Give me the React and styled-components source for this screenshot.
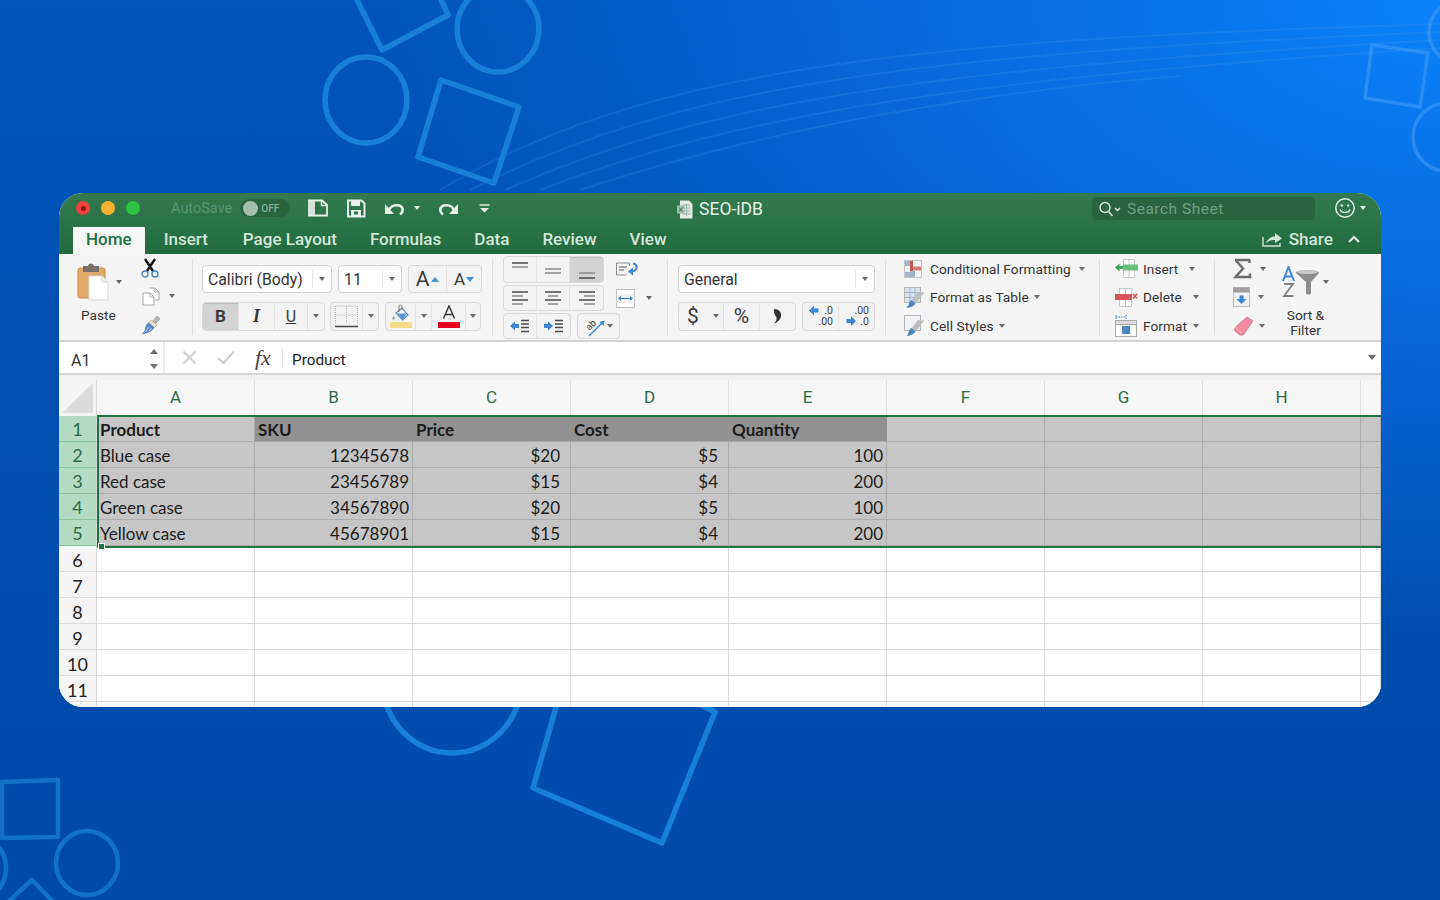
import React from 'react'
import styled, { createGlobalStyle } from 'styled-components'

const GlobalStyle = createGlobalStyle`
  html, body { margin: 0; padding: 0; height: 100%; overflow: hidden; }
  body { font-family: Roboto, "Liberation Sans", sans-serif; }
`

const Page = styled.div`
  position: relative;
  width: 1440px;
  height: 900px;
  box-sizing: border-box;
  padding: 193px 59px;
  overflow: hidden;
  background:
    radial-gradient(ellipse 1050px 640px at 100% 0%, #0a82f8 0%, rgba(10,120,240,.6) 50%, rgba(10,100,220,0) 100%),
    linear-gradient(180deg, #0054ba 0%, #004aa9 100%);
`

const Backdrop = styled.svg`
  position: absolute;
  inset: 0;
  width: 1440px;
  height: 900px;
  filter: blur(.7px);
`

const Window = styled.div`
  position: relative;
  width: 1322px;
  height: 514px;
  border-radius: 24px;
  overflow: hidden;
  background: #fff;
  display: flex;
  flex-direction: column;
`

/* title bar */
const TitleBar = styled.div`
  height: 33px;
  flex: none;
  display: grid;
  grid-template-columns: 1fr auto 1fr;
  align-items: center;
  background: linear-gradient(180deg, #33794e, #2a7248);
  color: #e6efe9;
`
const TitleLeft = styled.div`
  display: flex;
  align-items: center;
  padding-left: 17px;
  padding-bottom: 3px;
`
const TitleRight = styled.div`
  display: flex;
  align-items: center;
  justify-content: flex-end;
  padding-right: 15px;
  padding-bottom: 3px;
`
const Light = styled.span`
  width: 14px;
  height: 14px;
  margin-right: ${p => p.$gap}px;
  border-radius: 50%;
  background: ${p => p.$color};
  display: flex;
  align-items: center;
  justify-content: center;
  &::after {
    content: '';
    display: ${p => (p.$dot ? 'block' : 'none')};
    width: 5px;
    height: 5px;
    border-radius: 50%;
    background: #8d1a17;
  }
`
const AutoSave = styled.span`
  margin-left: 31px;
  font-size: 14.5px;
  color: #5c9877;
`
const Toggle = styled.span`
  width: 50px;
  height: 18px;
  margin-left: 8px;
  margin-right: 17px;
  box-sizing: border-box;
  padding-left: 3px;
  border-radius: 9px;
  background: #2a6340;
  display: flex;
  align-items: center;
  gap: 3px;
  font-size: 10px;
  font-weight: 500;
  color: #86b197;
  &::before {
    content: '';
    width: 15px;
    height: 15px;
    border-radius: 50%;
    background: #a3bfae;
  }
`
const BarIcon = styled.span`
  display: flex;
  margin-left: ${p => p.$left || 0}px;
`
const DocTitle = styled.div`
  display: flex;
  align-items: center;
  gap: 6px;
  font-size: 17.5px;
  color: #e8f1eb;
  padding-bottom: 1px;
`
const SearchBox = styled.div`
  width: 223px;
  height: 23px;
  box-sizing: border-box;
  padding: 1px 0 0 6px;
  border-radius: 4px;
  background: #2a6340;
  display: flex;
  align-items: center;
  gap: 6px;
  font-size: 15.5px;
  letter-spacing: .5px;
  color: #6d9f83;
`

/* tabs */
const TabBar = styled.div`
  height: 28px;
  flex: none;
  display: flex;
  align-items: flex-end;
  padding-left: 14px;
  padding-right: 21px;
  background: linear-gradient(180deg, #2a7248, #226b3f);
`
const Tab = styled.div`
  height: 27px;
  box-sizing: border-box;
  padding: 0 ${p => (p.$active ? 13 : 0)}px 3px;
  margin-right: ${p => p.$gap}px;
  display: flex;
  align-items: center;
  font-size: 17px;
  font-weight: 500;
  color: ${p => (p.$active ? '#217346' : '#d4e6da')};
  background: ${p => (p.$active ? '#f6f6f6' : 'transparent')};
`
const ShareBlock = styled.div`
  margin-left: auto;
  height: 27px;
  padding-bottom: 3px;
  box-sizing: border-box;
  display: flex;
  align-items: center;
  gap: 6px;
  font-size: 17.2px;
  font-weight: 500;
  color: #d4e6da;
`

/* ribbon */
const Ribbon = styled.div`
  height: 88px;
  flex: none;
  box-sizing: border-box;
  display: flex;
  background: #f5f5f5;
  border-bottom: 2px solid #d3d3d3;
  color: #333;
`
const Group = styled.div`
  position: relative;
  width: ${p => p.$width}px;
  flex: none;
  box-sizing: border-box;
  padding: ${p => p.$top ?? 11}px 0 0 ${p => p.$left}px;
  &::before {
    content: '';
    display: ${p => (p.$noline ? 'none' : 'block')};
    position: absolute;
    left: 0;
    top: 5px;
    bottom: 5px;
    width: 1px;
    background: #e0e0e0;
  }
`
const Row = styled.div`
  display: flex;
  align-items: center;
  gap: ${p => p.$gap ?? 6}px;
  height: ${p => p.$height || 28}px;
  margin-bottom: ${p => p.$bottom || 0}px;
`
const Split = styled.div`
  display: flex;
`
const Column = styled.div`
  display: flex;
  flex-direction: column;
  align-items: ${p => p.$align || 'flex-start'};
  margin-left: ${p => p.$left || 0}px;
  padding-top: ${p => p.$top || 0}px;
`
const PasteLabel = styled.div`
  font-size: 13.7px;
  margin-top: 6px;
  padding-left: 4px;
`
const ToolRow = styled.div`
  display: flex;
  align-items: center;
  gap: ${p => p.$gap ?? 8}px;
  height: ${p => p.$height || 28}px;
  margin-left: ${p => p.$left || 0}px;
  margin-top: ${p => p.$top || 0}px;
`
const SelectBox = styled.div`
  width: ${p => p.$width}px;
  height: 28px;
  box-sizing: border-box;
  padding-left: 5px;
  display: flex;
  align-items: center;
  justify-content: space-between;
  background: #fff;
  border: 1px solid #d2d2d2;
  border-radius: 4px;
  font-size: 15.8px;
  color: #333;
`
const SelectArrow = styled.span`
  width: 18px;
  height: 18px;
  display: flex;
  align-items: center;
  justify-content: center;
  border-left: 1px solid #e6e6e6;
`
const Caret = styled.span`
  display: inline-block;
  flex: none;
  width: 0;
  height: 0;
  margin: ${p => p.$margin || 0};
  border-left: ${p => p.$size || 3}px solid transparent;
  border-right: ${p => p.$size || 3}px solid transparent;
  border-top: ${p => (p.$size || 3) + 1}px solid ${p => p.$color || '#6a6a6a'};
  transform: ${p => (p.$up ? 'rotate(180deg)' : 'none')};
`
const ButtonGroup = styled.div`
  display: flex;
  height: ${p => p.$height || 29}px;
  box-sizing: border-box;
  margin-left: ${p => p.$left || 0}px;
  border: 1px solid #d8d8d8;
  border-radius: 4px;
  background: #f3f3f3;
  overflow: hidden;
`
const Button = styled.div`
  width: ${p => p.$width}px;
  flex: none;
  display: flex;
  align-items: center;
  justify-content: center;
  gap: ${p => p.$gap ?? 0}px;
  box-sizing: border-box;
  border-right: 1px solid ${p => (p.$open ? 'transparent' : '#e4e4e4')};
  background: ${p => (p.$active ? '#d3d3d3' : 'transparent')};
  box-shadow: ${p => (p.$active ? 'inset 0 1px 1px #bdbdbd' : 'none')};
  font-size: ${p => p.$size || 16}px;
  font-weight: ${p => p.$weight || 400};
  font-style: ${p => (p.$italic ? 'italic' : 'normal')};
  font-family: ${p => (p.$serif ? '"Liberation Serif", serif' : 'inherit')};
  text-decoration: ${p => (p.$under ? 'underline' : 'none')};
  color: #3a3a3a;
  &:last-child { border-right: none; }
`
const ListItem = styled.div`
  height: 28.5px;
  display: flex;
  align-items: center;
  gap: ${p => p.$gap ?? 5}px;
  font-size: 13.6px;
  color: #333;
  letter-spacing: .1px;
`
const SortLabel = styled.div`
  font-size: 13.7px;
  line-height: 15px;
  text-align: center;
  margin-top: 10px;
  color: #333;
`

/* formula bar */
const FormulaBar = styled.div`
  height: 33px;
  flex: none;
  box-sizing: border-box;
  display: flex;
  align-items: center;
  background: #fff;
  border-bottom: 2px solid #d6d6d6;
`
const NameBox = styled.div`
  width: 106px;
  height: 100%;
  box-sizing: border-box;
  padding: 6px 4px 0 12px;
  display: flex;
  align-items: center;
  justify-content: space-between;
  font-size: 16px;
  color: #333;
  border-right: 2px solid #ececec;
`
const NameArrows = styled.span`
  display: flex;
  margin-top: -3px;
`
const FormulaTools = styled.div`
  width: 118px;
  height: 19px;
  box-sizing: border-box;
  padding-left: 17px;
  display: flex;
  align-items: center;
  gap: 20px;
  border-right: 1px solid #dddddd;
`
const FxLabel = styled.span`
  font-family: "Liberation Serif", serif;
  font-style: italic;
  font-size: 22px;
  color: #444;
`
const FormulaText = styled.div`
  flex: 1;
  padding: 5px 0 0 9px;
  font-size: 15.3px;
  color: #222;
`
const Strip = styled.div`
  height: 5px;
  flex: none;
  background: #f3f3f3;
`

/* sheet */
const Sheet = styled.div`
  position: relative;
  flex: 1;
  display: grid;
  grid-template-columns: 38px repeat(8, 158px) 1fr;
  grid-template-rows: 36px;
  grid-auto-rows: 26px;
  font-family: Lato, "Liberation Sans", sans-serif;
  font-size: 17px;
  color: #1c1c1c;
  background: #fff;
`
const Corner = styled.div`
  background: #f4f4f4;
  border-right: 1px solid #d8d8d8;
  display: flex;
  align-items: flex-end;
  justify-content: flex-end;
  padding: 0 3px 3px 0;
  &::after {
    content: '';
    width: 0;
    height: 0;
    border-left: 31px solid transparent;
    border-bottom: 30px solid #dcdcdc;
  }
`
const ColHead = styled.div`
  display: flex;
  align-items: center;
  justify-content: center;
  padding-bottom: 3px;
  background: #f7f7f7;
  border-right: 1px solid #e2e2e2;
  font-family: Roboto, sans-serif;
  font-size: 17px;
  color: #2c6b48;
`
const RowHead = styled.div`
  display: flex;
  align-items: center;
  justify-content: center;
  box-sizing: border-box;
  padding-top: ${p => (p.$selected ? 0 : 2)}px;
  font-size: 18px;
  background: ${p => (p.$selected ? '#b4dbc3' : '#f5f5f5')};
  color: ${p => (p.$selected ? '#2c6b48' : '#222')};
  border-bottom: 1px solid ${p => (p.$selected ? '#8cc4a2' : '#dcdcdc')};
  border-right: 1px solid #d8d8d8;
`
const Cell = styled.div`
  box-sizing: border-box;
  padding: 1px ${p => p.$pad || 3}px 0 3px;
  display: flex;
  align-items: center;
  white-space: nowrap;
  justify-content: ${p => (p.$right ? 'flex-end' : 'flex-start')};
  font-weight: ${p => (p.$bold ? 700 : 400)};
  background: ${p => (p.$dark ? '#919191' : p.$selected ? '#c6c6c6' : '#fff')};
  border-right: 1px solid ${p => (p.$dark ? '#919191' : p.$selected ? '#adadad' : '#dcdcdc')};
  border-bottom: 1px solid ${p => (p.$selected ? '#adadad' : '#dcdcdc')};
`
const Selection = styled.div`
  position: absolute;
  left: 38px;
  right: 0;
  top: 35px;
  height: 133px;
  box-sizing: border-box;
  border-top: 2px solid #217346;
  border-bottom: 2px solid #217346;
  border-left: 2px solid #217346;
  pointer-events: none;
  &::after {
    content: '';
    position: absolute;
    left: -1px;
    bottom: -4px;
    width: 5px;
    height: 5px;
    background: #217346;
    border: 1px solid #fff;
  }
`

/* icons */
const Svg = ({ w, h, children }) => (
  <svg width={w} height={h} viewBox={`0 0 ${w} ${h}`} fill="none" style={{ flex: 'none', display: 'block' }}>{children}</svg>
)

const TitleColor = '#e6efe9'

const PanelIcon = () => (
  <Svg w={22} h={18}>
    <path d="M2 1.500h13l5 4.500v10.500H2z" stroke={TitleColor} strokeWidth="1.800" />
    <path d="M3 2h5v14H3z" fill={TitleColor} opacity=".9" />
    <path d="M14.500 2v4.500H20" stroke={TitleColor} strokeWidth="1.400" />
  </Svg>
)
const SaveIcon = () => (
  <Svg w={20} h={19}>
    <path d="M2 1.500h13.500l3 3v13H2z" stroke={TitleColor} strokeWidth="2" />
    <path d="M5 2h9v5H5z" fill={TitleColor} />
    <path d="M5 11h10v6H5z" fill={TitleColor} />
    <path d="M8 12.500h4v3H8z" fill="#2f7549" />
  </Svg>
)
const UndoIcon = ({ flip }) => (
  <svg width="21" height="15" viewBox="0 0 21 15" fill="none" style={{ display: 'block', transform: flip ? 'scaleX(-1)' : 'none' }}>
    <path d="M1 3v10h9z" fill={TitleColor} />
    <path d="M5 8.500C8 3.500 16.500 2.500 18.500 7.500 19.300 10 18 12 16 13.500" stroke={TitleColor} strokeWidth="2.600" />
  </svg>
)
const CustomizeIcon = () => (
  <Svg w={11} h={9}>
    <path d="M0.500 1h10" stroke={TitleColor} strokeWidth="1.500" />
    <path d="M1 4h9l-4.500 4.500z" fill={TitleColor} />
  </Svg>
)
const WorkbookIcon = () => (
  <Svg w={16} h={19}>
    <path d="M3 .5h9l3.500 3.500v14.500H3z" fill="#e4ebe6" />
    <path d="M6 5h7M6 8h7M6 11h7M6 14h7M9.500 4v12" stroke="#8fb09c" strokeWidth=".9" />
    <path d="M0 5.500h7.500v8H0z" fill="#9fbcaa" />
    <path d="M2 7.500l3.500 4M5.500 7.500l-3.500 4" stroke="#2e7548" strokeWidth="1" />
  </Svg>
)
const SearchIcon = () => (
  <Svg w={23} h={16}>
    <circle cx="7" cy="6.500" r="5" stroke="#dfeae3" strokeWidth="1.400" />
    <path d="M10.500 10.500l4 4.500" stroke="#dfeae3" strokeWidth="1.500" />
    <path d="M17 7l2.500 2.500L22 7" stroke="#dfeae3" strokeWidth="1.300" />
  </Svg>
)
const SmileIcon = () => (
  <Svg w={22} h={22}>
    <circle cx="11" cy="11" r="9.200" stroke={TitleColor} strokeWidth="1.500" />
    <circle cx="7.800" cy="8.500" r="1.200" fill={TitleColor} />
    <circle cx="14.200" cy="8.500" r="1.200" fill={TitleColor} />
    <path d="M6 12.500c1.500 4 8.500 4 10 0" stroke={TitleColor} strokeWidth="1.400" />
  </Svg>
)
const ShareIcon = () => (
  <Svg w={21} h={16}>
    <path d="M1 6v9h17v-3" stroke="#d4e6da" strokeWidth="1.400" />
    <path d="M4 13c1-5 5-7.500 9-7.500V2l7 5.500L13 12V9c-4-.5-7 1-9 4z" fill="#d4e6da" />
  </Svg>
)
const ChevronIcon = () => (
  <Svg w={12} h={8}>
    <path d="M1 7l5-5 5 5" stroke="#e3eee7" strokeWidth="2" />
  </Svg>
)
const PasteIcon = () => (
  <Svg w={32} h={38}>
    <rect x="1" y="5" width="27" height="30" rx="2" fill="#e0a866" stroke="#c4904f" />
    <path d="M6 3h5c.5-3.500 5-3.500 6 0h5v6H6z" fill="#77706a" />
    <path d="M12 13h13l6 6v18H12z" fill="#fff" stroke="#d8d8d8" />
    <path d="M25 13v6h6" fill="#efefef" stroke="#d0d0d0" />
  </Svg>
)
const ScissorsIcon = () => (
  <Svg w={18} h={20}>
    <path d="M4 1l8 12M14 1L6 13" stroke="#111" strokeWidth="2.400" />
    <circle cx="4" cy="16" r="3" stroke="#4a80b8" strokeWidth="1.300" />
    <circle cx="14" cy="16" r="3" stroke="#4a80b8" strokeWidth="1.300" />
  </Svg>
)
const CopyIcon = () => (
  <Svg w={18} h={19}>
    <path d="M7 1h6l4 4v8h-4" stroke="#a8a8a8" fill="#fff" />
    <path d="M1 6h7l4 4v8H1z" stroke="#a8a8a8" fill="#fff" />
    <path d="M13 1v4h4M8 6v4h4" stroke="#a8a8a8" />
  </Svg>
)
const BrushIcon = () => (
  <Svg w={21} h={20}>
    <path d="M13 6l4-5 3 2.500-4 5z" fill="#b5b5b5" stroke="#8c8c8c" strokeWidth=".6" />
    <path d="M11 5l6 5-2.500 2.500-6-5z" fill="#ece3cd" stroke="#a99a7b" strokeWidth=".6" />
    <path d="M8.500 7.500l6 5c-2.500 4-7 6-13 7 2-2 3.200-3.500 3.700-6.500 .5-2.500 1.500-4.500 3.300-5.500z" fill="#5a8fc6" />
    <path d="M5.500 17l3-5M9 16.500l2.500-3.500" stroke="#dfe9f3" strokeWidth=".8" />
  </Svg>
)
const BorderIcon = () => (
  <Svg w={23} h={23}>
    <path d="M.5 1h22M.5 1v18M22.500 1v18M11.500 1v18M.5 10h22" stroke="#b5b5b5" strokeDasharray="1 1" />
    <path d="M0 21.500h23" stroke="#4a4a4a" strokeWidth="1.400" />
  </Svg>
)
const FillIcon = () => (
  <Svg w={22} h={24}>
    <path d="M6 9l6-5 6 7-5.500 5z" fill="#fff" stroke="#5f8fc0" strokeWidth="1.200" />
    <path d="M7 9.500h10l-4.500 6.500z" fill="#5b93cd" />
    <path d="M9 8V2.500c0-2 3-2 3 0V6" stroke="#777" />
    <path d="M3.500 12c-1.500 2-1.500 3.500 0 3.500s1.500-1.500 0-3.500z" fill="#5b93cd" />
    <rect x="0" y="18" width="22" height="6" rx="1" fill="#f6dc88" />
  </Svg>
)
const FontColorIcon = () => (
  <Svg w={22} h={23}>
    <path d="M5.500 13.500L11 1l5.500 12.500M7.300 9.500h7.400" stroke="#3a3a3a" strokeWidth="1.500" />
    <rect x="0" y="17" width="22" height="6" fill="#e6001f" />
  </Svg>
)
const Lines = ({ rows, w = 20, h = 20 }) => (
  <Svg w={w} h={h}>
    {rows.map(([x1, x2, y, c], i) => (
      <path key={i} d={`M${x1} ${y}H${x2}`} stroke={c || '#4a4a4a'} strokeWidth="1.300" />
    ))}
  </Svg>
)
const Arrow = ({ x, y, dir }) => (
  <path
    d={dir === 'left'
      ? `M${x} ${y}l5-4.500v2.500h4v4h-4v2.500z`
      : `M${x + 9} ${y}l-5-4.500v2.500h-4v4h4v2.500z`}
    fill="#3f86d0"
  />
)
const IndentIcon = ({ dir }) => (
  <Svg w={20} h={14}>
    <Arrow x={0} y={7} dir={dir} />
    <path d="M11 1.500h8M11 5h8M11 8.500h8M11 12.500h8" stroke="#4a4a4a" strokeWidth="1.300" />
  </Svg>
)
const OrientIcon = () => (
  <Svg w={21} h={21}>
    <path d="M5 20L19 6" stroke="#3f86d0" strokeWidth="1.400" />
    <path d="M20.500 4.500l-1 5.500-4-4z" fill="#3f86d0" />
    <text x="7" y="12" fontSize="9.500" fill="#444" textAnchor="middle" transform="rotate(-45 7 9)" fontFamily="Roboto">ab</text>
  </Svg>
)
const WrapIcon = () => (
  <Svg w={23} h={15}>
    <path d="M.5 1h13v3M.5 1v12h10" stroke="#8a8a8a" />
    <path d="M3 5h8M3 8h5" stroke="#555" />
    <path d="M17 1.500c5 1 5 7-1 8" stroke="#3f86d0" strokeWidth="2.200" />
    <path d="M12 9.500l5-4v8z" fill="#3f86d0" />
  </Svg>
)
const MergeIcon = () => (
  <Svg w={19} h={19}>
    <rect x=".5" y=".5" width="18" height="18" fill="#fff" stroke="#c4c4c4" />
    <path d="M.5 6h18M.5 13h18" stroke="#e0e0e0" />
    <path d="M3 9.500h13" stroke="#3f86d0" strokeWidth="1.300" />
    <path d="M2 9.500l3-2.500v5zM17 9.500L14 7v5z" fill="#3f86d0" />
  </Svg>
)
const CommaIcon = () => (
  <Svg w={9} h={16}>
    <path d="M1 1c5 0 7.500 3 7 7-.5 3.500-3.500 6.500-7 7.500 2-2 3-4 2.500-6C3 7.500.5 7 1 1z" fill="#333" />
  </Svg>
)
const DecimalIcon = ({ top, bottom, arrowTop }) => (
  <Svg w={26} h={24}>
    <text x="25" y="9.500" fontSize="10.500" fill="#444" textAnchor="end" fontFamily="Roboto">{top}</text>
    <text x="25" y="20.500" fontSize="10.500" fill="#444" textAnchor="end" fontFamily="Roboto">{bottom}</text>
    {arrowTop
      ? <path d="M1 6.500l5-5v3h4.500v4H6v3z" fill="#3f86d0" />
      : <path d="M12 17l-5-5v3H2.500v4H7v3z" fill="#3f86d0" />}
  </Svg>
)
const CondIcon = () => (
  <Svg w={18} h={18}>
    <rect x=".5" y=".5" width="17" height="17" fill="#f2f2f2" stroke="#c4c4c4" />
    <path d="M1 1h5v5H1zM1 12h5v5H1z" fill="#a3b6cc" />
    <path d="M6 1h3v10H6z" fill="#c65757" />
    <path d="M9 6.500h8v4H9z" fill="#d97a7a" />
    <path d="M6 11h5v6H6z" fill="#9db3cb" />
  </Svg>
)
const TableBrushIcon = ({ lined }) => (
  <Svg w={21} h={21}>
    <rect x=".5" y=".5" width="16" height="15" fill={lined ? '#dbe4ee' : '#eef1f5'} stroke="#b5b5b5" />
    {lined && <path d="M.5 5.500h16M.5 10.500h16M6 .5v15M11 .5v15" stroke="#9fb1c6" />}
    <path d="M14 5l6.500 .5-9 11-4-3z" fill="#bdbdbd" />
    <path d="M7.500 13l4 3.500c-2 3-5 4-9 4.500 2-2 2-3.500 2.500-5 .5-1.500 1-2.500 2.500-3z" fill="#4e86c0" />
  </Svg>
)
const InsertIcon = () => (
  <Svg w={23} h={19}>
    <path d="M8.500.5h11v18h-11zM14 .5v18" stroke="#c8c8c8" fill="#fff" />
    <path d="M8 5.500h15v6H8z" fill="#6cbf7a" />
    <path d="M0 8.500l4.500-4v2.500H8v3H4.500v2.500z" fill="#3ea257" />
  </Svg>
)
const DeleteIcon = () => (
  <Svg w={23} h={19}>
    <path d="M4.500.5h12v18h-12zM10.500.5v18" stroke="#c8c8c8" fill="#fff" />
    <path d="M0 6h17v6H0z" fill="#d9565a" />
    <path d="M18 6l4 4.500M22 6l-4 4.500" stroke="#d9565a" strokeWidth="1.600" />
  </Svg>
)
const FormatIcon = () => (
  <Svg w={22} h={22}>
    <path d="M1 2h10M1 0v4M11 0v4" stroke="#3f86d0" strokeDasharray="1.500 1" />
    <rect x=".5" y="5.500" width="21" height="16" fill="#fff" stroke="#a8a8a8" />
    <path d="M.5 5.500h21v4H.5z" fill="#dcdcdc" stroke="#a8a8a8" />
    <rect x="7" y="11" width="8" height="8" fill="#4e86c0" />
  </Svg>
)
const SigmaIcon = () => (
  <Svg w={19} h={21}>
    <path d="M2 2h15M16.500 1.500V5M2.500 2L10 10.500 2.500 19H17v-3.500" stroke="#6b6b6b" strokeWidth="2.400" fill="none" />
  </Svg>
)
const FillDownIcon = () => (
  <Svg w={17} h={20}>
    <rect x=".5" y=".5" width="16" height="19" fill="#f0f0f0" stroke="#bdbdbd" />
    <path d="M.5 .5h16v5H.5z" fill="#9f9f9f" />
    <path d="M8.500 17l-5-5h3V8.500h4V12h3z" fill="#3f86d0" />
  </Svg>
)
const EraserIcon = () => (
  <Svg w={21} h={20}>
    <path d="M14 1l6 4-9 13c-1.500 1.500-3 1.500-5 .5l-3-2.500c-2-1.500-2-3-1-4.500z" fill="#ef8aa2" stroke="#c56a82" strokeWidth=".7" />
    <path d="M2 11l7 6" stroke="#f9c3cf" />
  </Svg>
)
const SortIcon = () => (
  <Svg w={38} h={32}>
    <path d="M1 15L6.500 1 12 15M3 10.500h7" stroke="#3f86d0" strokeWidth="2" />
    <path d="M2 18h9L2 30h9.500" stroke="#808080" strokeWidth="1.800" />
    <path d="M14 7c0-4 23-4 23 0l-8 9v11c0 2-5 2-5 0V16z" fill="#8c8c8c" />
    <ellipse cx="25.500" cy="6" rx="10" ry="2" fill="#c9c9c9" />
  </Svg>
)
const UpDownIcon = () => (
  <Svg w={10} h={24}>
    <path d="M5 2l4 5H1zM5 22L1 17h8z" fill="#6d6d6d" />
  </Svg>
)
const CrossIcon = () => (
  <Svg w={15} h={15}>
    <path d="M1.500 1.500l12 12M13.500 1.500l-12 12" stroke="#cfcfcf" strokeWidth="2.200" />
  </Svg>
)
const CheckIcon = () => (
  <Svg w={18} h={15}>
    <path d="M1 8l5.500 5L17 1.500" stroke="#cfcfcf" strokeWidth="2.200" />
  </Svg>
)

const columns = ['A', 'B', 'C', 'D', 'E', 'F', 'G', 'H']
const rows = [
  ['Product', 'SKU', 'Price', 'Cost', 'Quantity'],
  ['Blue case', '12345678', '$20', '$5', '100'],
  ['Red case', '23456789', '$15', '$4', '200'],
  ['Green case', '34567890', '$20', '$5', '100'],
  ['Yellow case', '45678901', '$15', '$4', '200'],
]
const tabs = [
  { name: 'Insert', gap: 35 },
  { name: 'Page Layout', gap: 33 },
  { name: 'Formulas', gap: 33 },
  { name: 'Data', gap: 33 },
  { name: 'Review', gap: 33 },
  { name: 'View', gap: 0 },
]

const Shapes = () => (
  <Backdrop viewBox="0 0 1440 900" fill="none">
    <g stroke="#4aa0f0" strokeWidth="2" opacity=".2">
      <path d="M440 190C640 70 900 40 1440 24" />
      <path d="M470 190C680 84 920 54 1440 32" />
      <path d="M505 190C710 98 950 68 1440 40" />
      <path d="M540 190C740 112 980 78 1440 48" />
      <path d="M580 190C780 124 1000 90 1180 76" />
    </g>
    <g stroke="#1680d8" strokeWidth="5.500" strokeLinejoin="round">
      <path d="M350 -14L382 50L448 15L432 -20" />
      <ellipse cx="498" cy="29" rx="41" ry="43" />
      <ellipse cx="366" cy="100" rx="41" ry="43" />
      <path d="M441 80L519 107L494 183L418 157z" />
      <ellipse cx="452" cy="682" rx="69" ry="71" />
      <path d="M533 788L662 843L715 712L575 640z" />
    </g>
    <g stroke="#1272c8" strokeWidth="4.500" strokeLinejoin="round">
      <path d="M2 782L58 780L58 837L2 838z" />
      <ellipse cx="87" cy="863" rx="31" ry="32" />
      <path d="M-6 915L32 880L66 915" />
      <circle cx="-28" cy="868" r="34" />
    </g>
    <g stroke="#4aa0f5" strokeWidth="3.500" opacity=".5" strokeLinejoin="round">
      <path d="M1372 45L1428 53L1420 107L1365 98z" />
      <circle cx="1462" cy="32" r="33" />
      <circle cx="1447" cy="137" r="34" />
    </g>
  </Backdrop>
)

// accounting style columns sit further from the right edge in the source sheet
const cellPad = c => (c === 2 || c === 3 ? 10 : 3)

export default function App() {
  return (
    <Page>
      <GlobalStyle />
      <Shapes />
      <Window>
        <TitleBar>
          <TitleLeft>
            <Light $color="#f0413c" $gap={11} $dot />
            <Light $color="#f5b32e" $gap={11} />
            <Light $color="#2fc244" $gap={0} />
            <AutoSave>AutoSave</AutoSave>
            <Toggle>OFF</Toggle>
            <BarIcon><PanelIcon /></BarIcon>
            <BarIcon $left={17}><SaveIcon /></BarIcon>
            <BarIcon $left={18}><UndoIcon /></BarIcon>
            <Caret $margin="0 0 0 9px" $color={TitleColor} />
            <BarIcon $left={18}><UndoIcon flip /></BarIcon>
            <BarIcon $left={20}><CustomizeIcon /></BarIcon>
          </TitleLeft>
          <DocTitle><WorkbookIcon />SEO-iDB</DocTitle>
          <TitleRight>
            <SearchBox><SearchIcon />Search Sheet</SearchBox>
            <BarIcon $left={19}><SmileIcon /></BarIcon>
            <Caret $margin="0 0 0 4px" $color={TitleColor} />
          </TitleRight>
        </TitleBar>

        <TabBar>
          <Tab $active $gap={19}>Home</Tab>
          {tabs.map(t => <Tab key={t.name} $gap={t.gap}>{t.name}</Tab>)}
          <ShareBlock>
            <ShareIcon />
            Share
            <BarIcon $left={9}><ChevronIcon /></BarIcon>
          </ShareBlock>
        </TabBar>

        <Ribbon>
          <Group $width={133} $left={18} $noline $top={9}>
            <Split>
              <Column>
                <ToolRow $height={38} $gap={7}>
                  <PasteIcon />
                  <Caret />
                </ToolRow>
                <PasteLabel>Paste</PasteLabel>
              </Column>
              <Column>
                <ToolRow $height={20} $left={19} $top={-5}><ScissorsIcon /></ToolRow>
                <ToolRow $height={36} $left={20}><CopyIcon /><Caret $margin="0 0 0 1px" /></ToolRow>
                <ToolRow $height={22} $left={18}><BrushIcon /></ToolRow>
              </Column>
            </Split>
          </Group>

          <Group $width={300} $left={10}>
            <Row $bottom={9}>
              <SelectBox $width={130}>Calibri (Body)<SelectArrow><Caret /></SelectArrow></SelectBox>
              <SelectBox $width={64}>11<SelectArrow><Caret /></SelectArrow></SelectBox>
              <ButtonGroup $height={28}>
                <Button $width={38} $size={21} $gap={2}>A<Caret $up $color="#4a90d9" $size={4} /></Button>
                <Button $width={34} $size={17} $gap={1}>A<Caret $color="#4a90d9" $size={4} /></Button>
              </ButtonGroup>
            </Row>
            <Row>
              <ButtonGroup>
                <Button $width={36} $active $weight={700} $size={17}>B</Button>
                <Button $width={36} $serif $italic $weight={700} $size={18}>I</Button>
                <Button $width={33} $under>U</Button>
                <Button $width={16}><Caret /></Button>
              </ButtonGroup>
              <ButtonGroup $left={-1}>
                <Button $width={32}><BorderIcon /></Button>
                <Button $width={15}><Caret /></Button>
              </ButtonGroup>
              <ButtonGroup>
                <Button $width={30}><FillIcon /></Button>
                <Button $width={16}><Caret /></Button>
                <Button $width={34}><FontColorIcon /></Button>
                <Button $width={14}><Caret /></Button>
              </ButtonGroup>
            </Row>
          </Group>

          <Group $width={175} $left={11} $top={2}>
            <Row $height={27} $bottom={2} $gap={12}>
              <ButtonGroup $height={27}>
                <Button $width={33}><Lines rows={[[2, 18, 3], [2, 18, 7, '#888']]} /></Button>
                <Button $width={33}><Lines rows={[[2, 18, 9, '#888'], [2, 18, 13, '#888']]} /></Button>
                <Button $width={33} $active><Lines rows={[[2, 18, 13, '#888'], [2, 18, 18]]} /></Button>
              </ButtonGroup>
              <WrapIcon />
            </Row>
            <Row $height={26} $bottom={2} $gap={12}>
              <ButtonGroup $height={26}>
                <Button $width={33}><Lines rows={[[2, 18, 3], [2, 13, 7, '#888'], [2, 18, 11], [2, 13, 15, '#888']]} h={18} /></Button>
                <Button $width={33}><Lines rows={[[2, 18, 3], [5, 15, 7, '#888'], [2, 18, 11], [5, 15, 15, '#888']]} h={18} /></Button>
                <Button $width={33}><Lines rows={[[2, 18, 3], [7, 18, 7, '#888'], [2, 18, 11], [7, 18, 15, '#888']]} h={18} /></Button>
              </ButtonGroup>
              <MergeIcon />
              <Caret $margin="0 0 0 -1px" />
            </Row>
            <Row $height={26} $gap={6}>
              <ButtonGroup $height={26}>
                <Button $width={33}><IndentIcon dir="left" /></Button>
                <Button $width={33}><IndentIcon dir="right" /></Button>
              </ButtonGroup>
              <ButtonGroup $height={26}>
                <Button $width={41} $gap={2}><OrientIcon /><Caret /></Button>
              </ButtonGroup>
            </Row>
          </Group>

          <Group $width={218} $left={11}>
            <Row $bottom={9}>
              <SelectBox $width={197}>General<SelectArrow><Caret /></SelectArrow></SelectBox>
            </Row>
            <Row>
              <ButtonGroup>
                <Button $width={29} $size={21} $open>$</Button>
                <Button $width={16}><Caret /></Button>
                <Button $width={36} $size={21}>%</Button>
                <Button $width={35}><CommaIcon /></Button>
              </ButtonGroup>
              <ButtonGroup>
                <Button $width={36}><DecimalIcon top=".0" bottom=".00" arrowTop /></Button>
                <Button $width={35}><DecimalIcon top=".00" bottom=".0" /></Button>
              </ButtonGroup>
            </Row>
          </Group>

          <Group $width={214} $left={19} $top={0.5}>
            <ListItem $gap={8}><CondIcon />Conditional Formatting<Caret /></ListItem>
            <ListItem $gap={5}><TableBrushIcon lined />Format as Table<Caret /></ListItem>
            <ListItem $gap={5}><TableBrushIcon />Cell Styles<Caret /></ListItem>
          </Group>

          <Group $width={115} $left={16} $top={0.5}>
            <ListItem $gap={5}><InsertIcon />Insert<Caret $margin="0 0 0 6px" /></ListItem>
            <ListItem $gap={5}><DeleteIcon />Delete<Caret $margin="0 0 0 6px" /></ListItem>
            <ListItem $gap={6}><FormatIcon />Format<Caret /></ListItem>
          </Group>

          <Group $width={167} $left={19} $top={0.5}>
            <Split>
              <Column>
                <ListItem $gap={8}><SigmaIcon /><Caret /></ListItem>
                <ListItem $gap={8}><FillDownIcon /><Caret /></ListItem>
                <ListItem $gap={5}><EraserIcon /><Caret /></ListItem>
              </Column>
              <Column $align="center" $left={16} $top={11}>
                <ToolRow $height={32} $gap={3}><SortIcon /><Caret /></ToolRow>
                <SortLabel>Sort &<br />Filter</SortLabel>
              </Column>
            </Split>
          </Group>
        </Ribbon>

        <FormulaBar>
          <NameBox>A1<NameArrows><UpDownIcon /></NameArrows></NameBox>
          <FormulaTools>
            <CrossIcon />
            <CheckIcon />
            <FxLabel>fx</FxLabel>
          </FormulaTools>
          <FormulaText>Product</FormulaText>
          <Caret $size={4} $margin="0 5px 0 0" />
        </FormulaBar>
        <Strip />

        <Sheet>
          <Corner />
          {columns.map(c => <ColHead key={c}>{c}</ColHead>)}
          <ColHead />
          {Array.from({ length: 12 }, (_, r) => (
            <React.Fragment key={r}>
              <RowHead $selected={r < 5}>{r < 11 ? r + 1 : ''}</RowHead>
              {Array.from({ length: 9 }, (_, c) => (
                <Cell
                  key={c}
                  $selected={r < 5}
                  $dark={r === 0 && c > 0 && c < 5}
                  $bold={r === 0}
                  $right={r > 0 && c > 0}
                  $pad={cellPad(c)}
                >
                  {rows[r]?.[c]}
                </Cell>
              ))}
            </React.Fragment>
          ))}
          <Selection />
        </Sheet>
      </Window>
    </Page>
  )
}
